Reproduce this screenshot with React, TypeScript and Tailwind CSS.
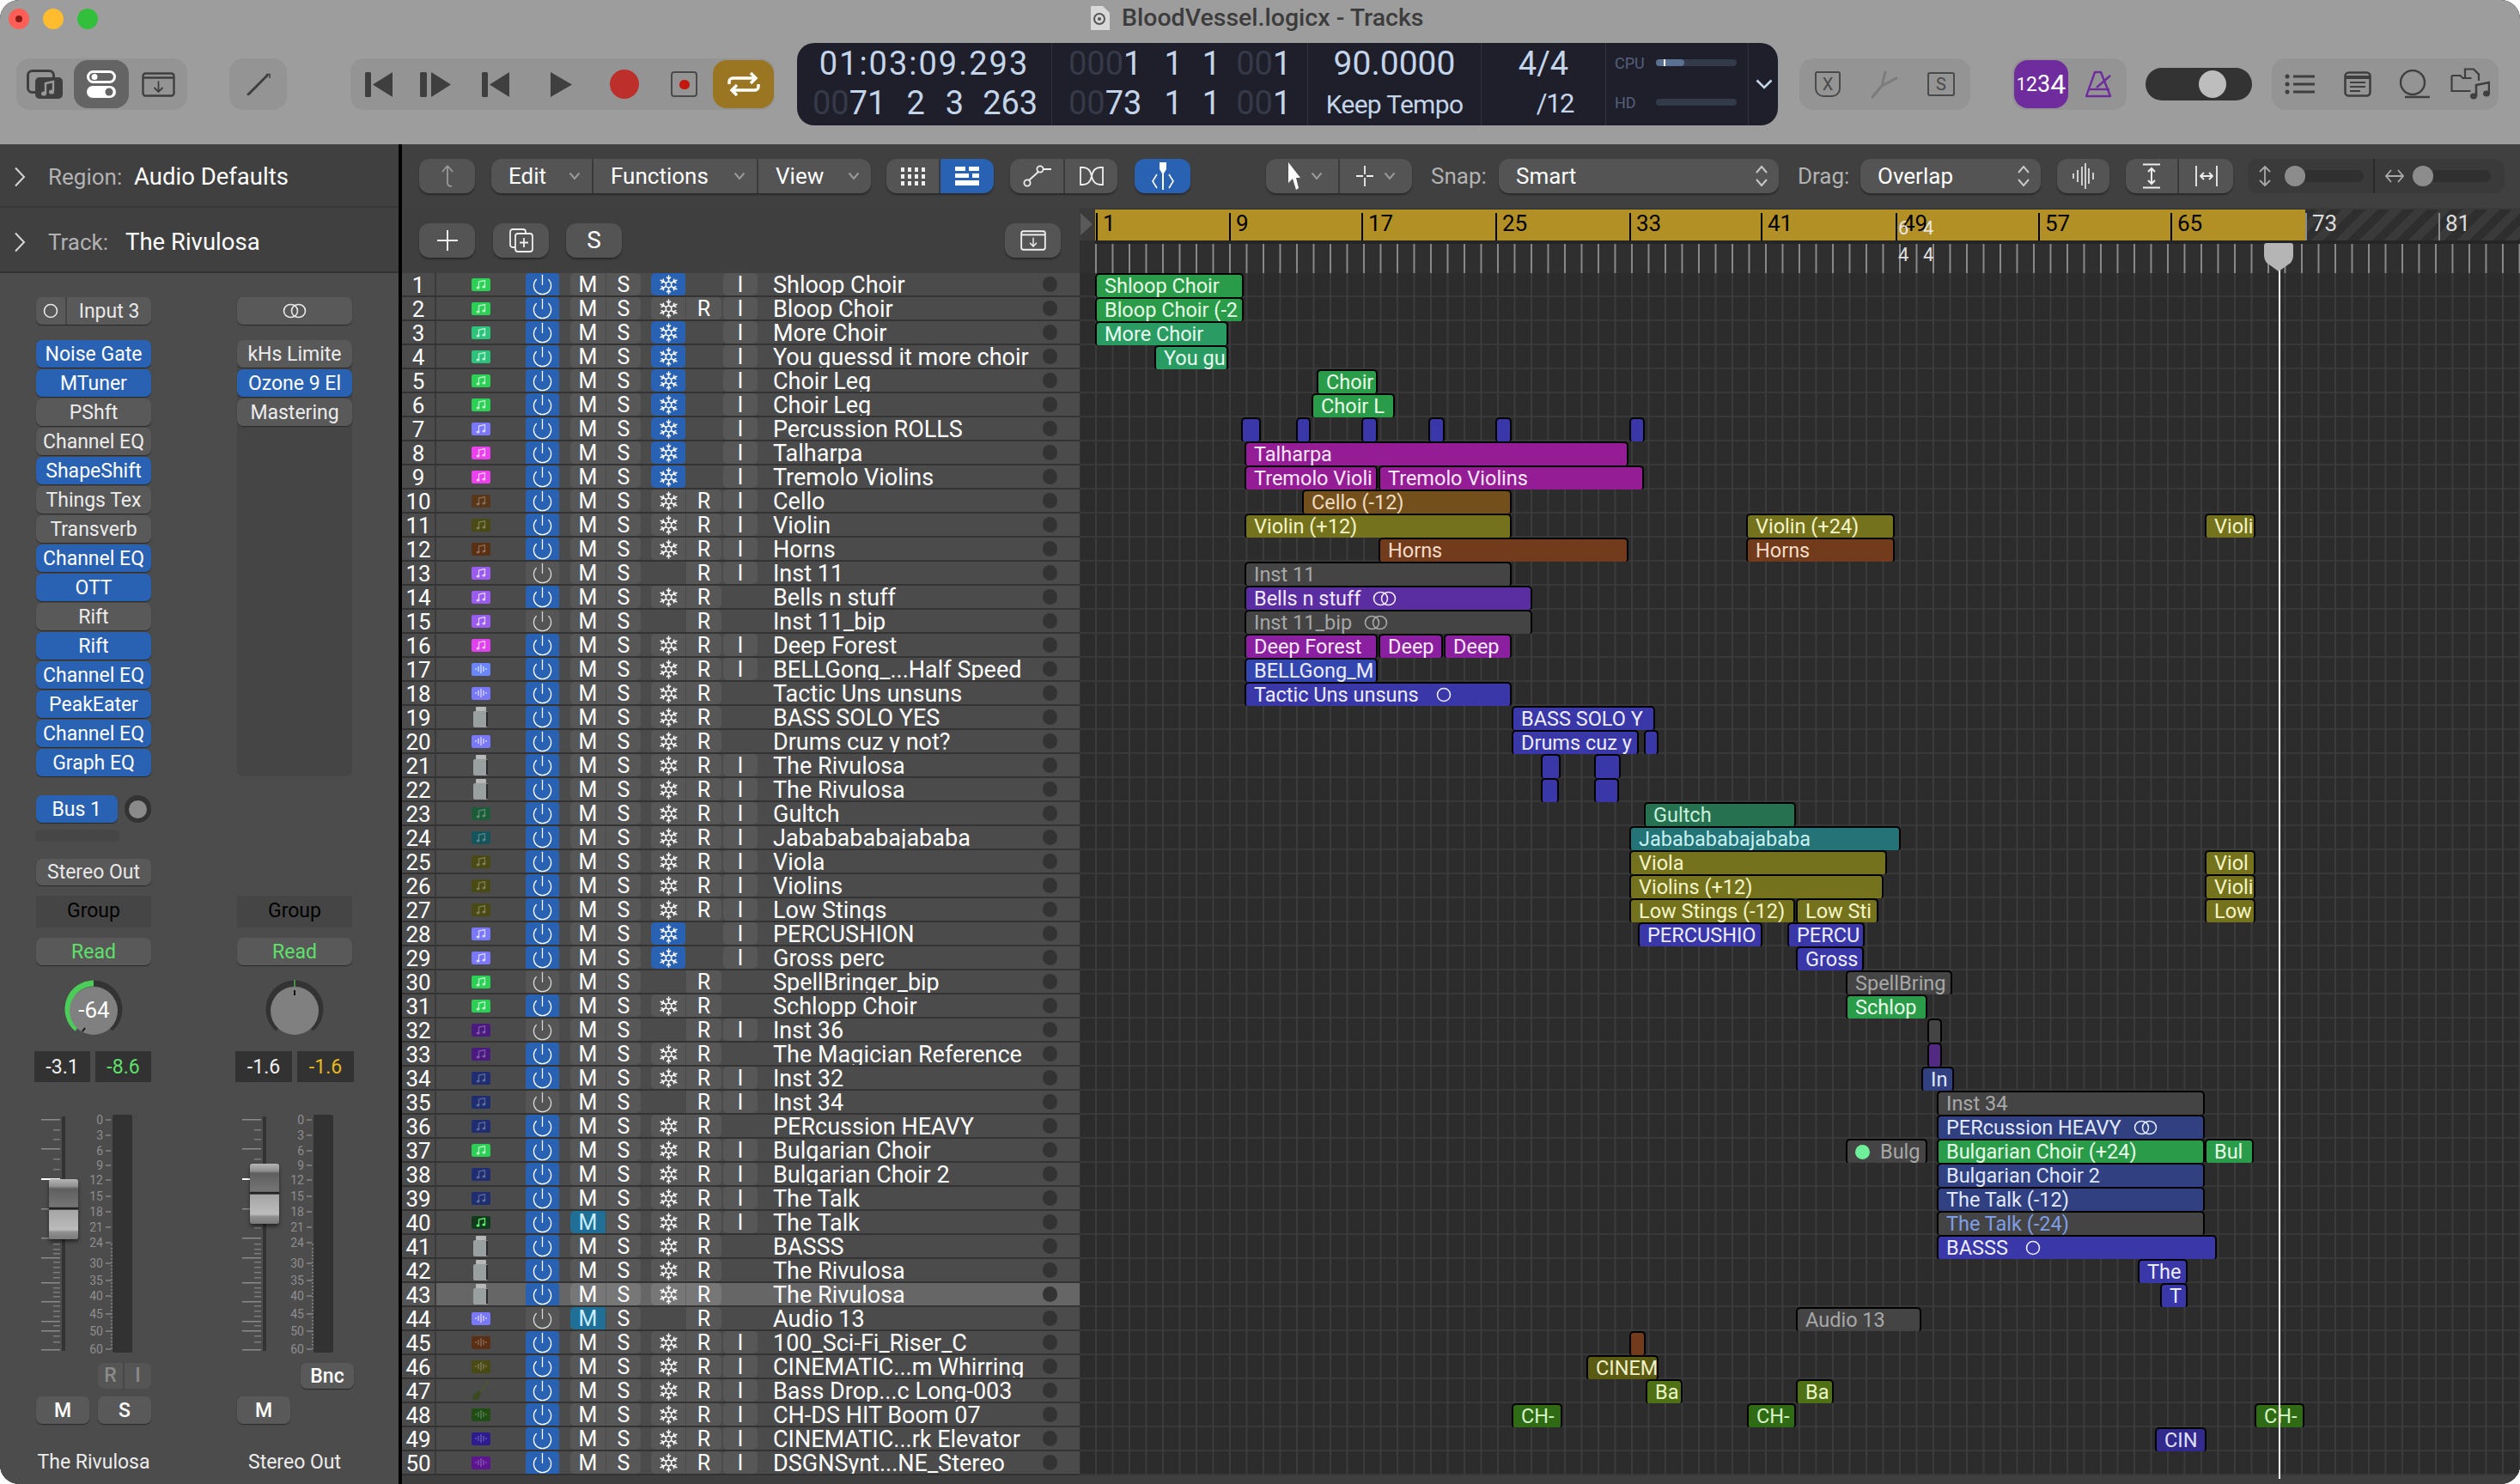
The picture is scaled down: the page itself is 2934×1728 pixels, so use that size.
import React from "react";
import { Power, Snowflake } from "lucide-react";

const GLYPH = "#3f3f3f";

type IconProps = { w: number; h: number; children: React.ReactNode; vb?: string };

function Svg({ w, h, children, vb }: IconProps) {
  return (
    <svg width={w} height={h} viewBox={vb ?? `0 0 ${w} ${h}`} preserveAspectRatio="none" fill="none" aria-hidden className="shrink-0">
      {children}
    </svg>
  );
}

function MediaIcon() {
  return (
    <Svg w={42} h={34}>
      <rect x="1.5" y="1.5" width="30" height="25" rx="5" stroke={GLYPH} strokeWidth="3" />
      <rect x="10" y="9" width="32" height="25" rx="5" fill={GLYPH} />
      <path d="M22 28V16l9-2v11" stroke="#999" strokeWidth="2.4" />
      <ellipse cx="20" cy="28" rx="3" ry="2.6" fill="#999" />
      <ellipse cx="29" cy="26" rx="3" ry="2.6" fill="#999" />
    </Svg>
  );
}

function SmartControlsIcon() {
  return (
    <Svg w={34} h={32}>
      <rect x="1.5" y="1.5" width="31" height="12" rx="6" stroke="#fff" strokeWidth="3" />
      <circle cx="9" cy="7.5" r="3.5" fill="#fff" />
      <rect x="0" y="18" width="34" height="14" rx="7" fill="#fff" />
      <circle cx="26" cy="25" r="4.5" fill="#646464" />
    </Svg>
  );
}

function DownloadBoxIcon({ color = GLYPH, w = 39, h = 29 }: { color?: string; w?: number; h?: number }) {
  return (
    <Svg w={w} h={h} vb="0 0 39 29">
      <rect x="1.5" y="1.5" width="36" height="26" rx="3" stroke={color} strokeWidth="2.4" />
      <path d="M1.5 6.5h36" stroke={color} strokeWidth="2.4" />
      <path d="M19.5 10.5v12M14.5 18l5 5 5-5" stroke={color} strokeWidth="1.8" />
    </Svg>
  );
}

function PencilIcon() {
  return (
    <Svg w={28} h={26}>
      <path d="M2 25 24 3" stroke={GLYPH} strokeWidth="3" strokeLinecap="round" />
      <path d="M23 1.5h4V6" stroke={GLYPH} strokeWidth="1.5" />
    </Svg>
  );
}

function TransportBack({ w }: { w: number }) {
  return (
    <Svg w={w} h={29} vb="0 0 32 29">
      <rect x="0" y="0" width="7" height="29" rx="1.5" fill={GLYPH} />
      <path d="M32 0v29L9 14.5z" fill={GLYPH} />
    </Svg>
  );
}

function TransportForward() {
  return (
    <Svg w={36} h={29}>
      <rect x="0" y="0" width="8" height="29" rx="1.5" fill={GLYPH} />
      <path d="M13 0v29l23-14.5z" fill={GLYPH} />
    </Svg>
  );
}

function CycleIcon() {
  return (
    <Svg w={38} h={30}>
      <path d="M2 15v-3a4 4 0 0 1 4-4h26M27 2l6 6-6 6" stroke="#fff" strokeWidth="3.4" />
      <path d="M36 15v3a4 4 0 0 1-4 4H6M11 16l-6 6 6 6" stroke="#fff" strokeWidth="3.4" />
    </Svg>
  );
}

function ShieldLetter({ letter }: { letter: string }) {
  return (
    <div className="flex h-[30px] w-[30px] items-center justify-center rounded-b-[10px] rounded-t-[3px] border-2 border-[#4a4a4a] text-[20px] leading-none text-[#4a4a4a]">
      {letter}
    </div>
  );
}

function BoxLetter({ letter }: { letter: string }) {
  return (
    <div className="flex h-[28px] w-[32px] items-center justify-center rounded-[3px] border-2 border-[#4a4a4a] text-[20px] leading-none text-[#4a4a4a]">
      {letter}
    </div>
  );
}

function TuningForkIcon() {
  return (
    <Svg w={34} h={34}>
      <path d="M3 32l11-13M14 19l4-16M14 19l17-9" stroke="#7c7c7c" strokeWidth="3" strokeLinecap="round" />
    </Svg>
  );
}

function MetronomeIcon() {
  return (
    <Svg w={31} h={32}>
      <path d="M1 30 11 2h7l11 28z" stroke="#6f2c9c" strokeWidth="2.4" strokeLinejoin="round" />
      <path d="M3 22h25" stroke="#6f2c9c" strokeWidth="2.4" />
      <path d="M13 20 29 6" stroke="#6f2c9c" strokeWidth="2.4" />
    </Svg>
  );
}

function ListIcon() {
  return (
    <Svg w={35} h={24}>
      <path d="M10 3h25M10 12h25M10 21h25" stroke={GLYPH} strokeWidth="3" />
      <circle cx="3" cy="3" r="2.5" fill={GLYPH} />
      <circle cx="3" cy="12" r="2.5" fill={GLYPH} />
      <circle cx="3" cy="21" r="2.5" fill={GLYPH} />
    </Svg>
  );
}

function NotePadIcon() {
  return (
    <Svg w={32} h={30}>
      <rect x="1.5" y="1.5" width="29" height="27" rx="4" stroke={GLYPH} strokeWidth="2.6" />
      <path d="M1.5 7h29" stroke={GLYPH} strokeWidth="4" />
      <path d="M7 13h18M7 18h18M7 23h12" stroke={GLYPH} strokeWidth="1.8" />
    </Svg>
  );
}

function LoopIcon() {
  return (
    <Svg w={37} h={34}>
      <ellipse cx="17" cy="15" rx="14" ry="14" stroke={GLYPH} strokeWidth="2.4" />
      <path d="M8 32h29" stroke={GLYPH} strokeWidth="2.6" />
    </Svg>
  );
}

function BrowserIcon() {
  return (
    <Svg w={46} h={38}>
      <path d="M1.5 9v18h22M1.5 9h10l3 3h10" stroke={GLYPH} strokeWidth="2.2" />
      <path d="M17 12V1.5h10l6 6V15" stroke={GLYPH} strokeWidth="2.2" />
      <path d="M30 33V20l15-3v13" stroke={GLYPH} strokeWidth="2.6" />
      <ellipse cx="27" cy="33" rx="4" ry="3.4" fill={GLYPH} />
      <ellipse cx="42" cy="30" rx="4" ry="3.4" fill={GLYPH} />
    </Svg>
  );
}

function FileIcon() {
  return (
    <Svg w={24} h={28}>
      <path d="M2 0h14l8 8v20H2z" fill="#d8d8d8" />
      <circle cx="12" cy="15" r="6" stroke="#555" strokeWidth="2" />
      <circle cx="12" cy="15" r="2" fill="#555" />
    </Svg>
  );
}

function Ring({ dbl }: { dbl?: boolean }) {
  return (
    <Svg w={dbl ? 28 : 18} h={18}>
      {dbl ? (
        <>
          <ellipse cx="9.5" cy="9" rx="8" ry="7.5" stroke="currentColor" strokeWidth="1.6" />
          <ellipse cx="18.5" cy="9" rx="8" ry="7.5" stroke="currentColor" strokeWidth="1.6" />
        </>
      ) : (
        <ellipse cx="9" cy="9" rx="7.5" ry="7.5" stroke="currentColor" strokeWidth="1.6" />
      )}
    </Svg>
  );
}

// ---- top of window ----

function Group({ w, children }: { w: string; children: React.ReactNode }) {
  return <div className={`flex h-[60px] items-center rounded-[16px] bg-[#949494] ${w}`}>{children}</div>;
}

function Digits({ parts }: { parts: [string, string, boolean?][] }) {
  return (
    <>
      {parts.map(([text, ml, dim], i) => (
        <span key={i} className={`${ml} ${dim ? "text-[#363a48]" : "text-[#c4d5ea]"}`}>
          {text}
        </span>
      ))}
    </>
  );
}

function LcdCol({ w, border = true, children }: { w: string; border?: boolean; children: React.ReactNode }) {
  return <div className={`flex h-full flex-col ${w} ${border ? "border-r border-[#2f3140]" : ""}`}>{children}</div>;
}

function LcdRow({ className = "", children }: { className?: string; children: React.ReactNode }) {
  return <div className={`flex h-[46px] items-center whitespace-nowrap font-normal text-[#c4d5ea] ${className}`}>{children}</div>;
}

function Lcd() {
  return (
    <div className="flex h-[96px] w-[1142px] rounded-[20px] bg-[#1e1f2a]">
      <LcdCol w="w-[297px]">
        <LcdRow className="justify-center pt-[3px] text-[38px] tracking-[2px]">01:03:09.293</LcdRow>
        <LcdRow className="pl-[18px] pt-[2px] text-[38px]">
          <Digits parts={[["00", "", true], ["71", ""], ["2", "ml-[24px]"], ["3", "ml-[24px]"], ["263", "ml-[22px]"]]} />
        </LcdRow>
      </LcdCol>
      <LcdCol w="w-[298px]">
        <LcdRow className="pl-[19px] pt-[3px] text-[38px]">
          <Digits parts={[["000", "", true], ["1", ""], ["1", "ml-[26px]"], ["1", "ml-[23px]"], ["00", "ml-[18px]", true], ["1", ""]]} />
        </LcdRow>
        <LcdRow className="pl-[19px] pt-[2px] text-[38px]">
          <Digits parts={[["00", "", true], ["73", ""], ["1", "ml-[26px]"], ["1", "ml-[23px]"], ["00", "ml-[18px]", true], ["1", ""]]} />
        </LcdRow>
      </LcdCol>
      <LcdCol w="w-[202px]">
        <LcdRow className="justify-center pt-[3px] text-[39px]">90.0000</LcdRow>
        <LcdRow className="justify-center pt-[4px] text-[30px] tracking-[-0.7px]">Keep Tempo</LcdRow>
      </LcdCol>
      <LcdCol w="w-[145px]">
        <LcdRow className="justify-center pt-[3px] text-[38px]">4/4</LcdRow>
        <LcdRow className="justify-end pr-[37px] pt-[4px] text-[31px] tracking-[-1.5px]">/12</LcdRow>
      </LcdCol>
      <LcdCol w="w-[166px]">
        <div className="flex h-[46px] items-center pl-[10px] text-[18px] text-[#55607a]">
          <span className="w-[48px]">CPU</span>
          <div className="relative h-[8px] w-[94px] rounded-full bg-[#333a4a]">
            <div className="h-full w-[33px] rounded-full bg-[#5a7192]" />
            <div className="absolute left-[9px] top-0 h-full w-[2px] bg-white" />
          </div>
        </div>
        <div className="flex h-[46px] items-center pl-[10px] text-[18px] text-[#55607a]">
          <span className="w-[48px]">HD</span>
          <div className="h-[8px] w-[94px] rounded-full bg-[#333a4a]" />
        </div>
      </LcdCol>
      <LcdCol w="w-[34px]" border={false}>
        <div className="flex h-full items-center pl-[8px]">
          <Svg w={20} h={12}>
            <path d="M1.5 1.5 10 10l8.5-8.5" stroke="#c4d5ea" strokeWidth="2.6" />
          </Svg>
        </div>
      </LcdCol>
    </div>
  );
}

function TopBar() {
  return (
    <div className="h-[168px] shrink-0 bg-[#9d9d9d]">
      <div className="flex h-[50px] items-start pl-[10px] pt-[7px]">
        <div className="mt-[3px] h-[24px] w-[24px] rounded-full bg-[#ff5f57] p-[8px]">
          <div className="h-full w-full rounded-full bg-[#8a1a14]" />
        </div>
        <div className="ml-[16px] mt-[3px] h-[24px] w-[24px] rounded-full bg-[#febc2e]" />
        <div className="ml-[16px] mt-[3px] h-[24px] w-[24px] rounded-full bg-[#32c03c]" />
        <div className="ml-[1154px] flex items-center gap-[14px]">
          <FileIcon />
          <span className="whitespace-nowrap text-[28.5px] font-medium leading-[28px] text-[#3c3c3c]">BloodVessel.logicx - Tracks</span>
        </div>
      </div>
      <div className="flex h-[96px] items-center pl-[19px]">
        <Group w="w-[199px]">
          <div className="ml-[12px]"><MediaIcon /></div>
          <div className="ml-[13px] flex h-[56px] w-[64px] items-center justify-center rounded-[16px] bg-[#646464]"><SmartControlsIcon /></div>
          <div className="ml-[15px]"><DownloadBoxIcon /></div>
        </Group>
        <div className="ml-[49px] flex h-[60px] w-[67px] items-center justify-center rounded-[16px] bg-[#949494]"><PencilIcon /></div>
        <div className="ml-[74px]">
          <Group w="w-[494px]">
            <div className="ml-[17px]"><TransportBack w={32} /></div>
            <div className="ml-[32px]"><TransportForward /></div>
            <div className="ml-[36px]"><TransportBack w={32} /></div>
            <div className="ml-[48px]"><Svg w={25} h={29}><path d="M0 0v29l25-14.5z" fill={GLYPH} /></Svg></div>
            <div className="ml-[44px] h-[34px] w-[34px] rounded-full bg-[#bc2f2a]" />
            <div className="ml-[37px] flex h-[30px] w-[31px] items-center justify-center rounded-[4px] border-2 border-[#4a4a4a]">
              <div className="h-[11px] w-[12px] rounded-full bg-[#c4160e]" />
            </div>
            <div className="ml-[18px] flex h-[56px] w-[71px] items-center justify-center rounded-[16px] bg-[#9a7623]"><CycleIcon /></div>
          </Group>
        </div>
        <div className="ml-[26px]"><Lcd /></div>
        <div className="ml-[25px]">
          <Group w="w-[199px]">
            <div className="ml-[18px]"><ShieldLetter letter="X" /></div>
            <div className="ml-[34px]"><TuningForkIcon /></div>
            <div className="ml-[33px]"><BoxLetter letter="S" /></div>
          </Group>
        </div>
        <div className="ml-[49px]">
          <Group w="w-[133px]">
            <div className="ml-[2px] flex h-[56px] w-[63px] items-center justify-center rounded-[16px] bg-[#6f2c9c] font-normal leading-none text-white">
              <span className="text-[20px]">1</span>
              <span className="text-[23px]">2</span>
              <span className="text-[27px]">3</span>
              <span className="text-[32px]">4</span>
            </div>
            <div className="ml-[20px]"><MetronomeIcon /></div>
          </Group>
        </div>
        <div className="ml-[22px] flex h-[38px] w-[124px] items-center rounded-full bg-[#333]">
          <div className="ml-[62px] h-[32px] w-[32px] rounded-full bg-[#bdbdbd]" />
        </div>
        <div className="ml-[23px]">
          <Group w="w-[264px]">
            <div className="ml-[15px]"><ListIcon /></div>
            <div className="ml-[34px]"><NotePadIcon /></div>
            <div className="ml-[31px]"><LoopIcon /></div>
            <div className="ml-[24px]"><BrowserIcon /></div>
          </Group>
        </div>
      </div>
    </div>
  );
}

// ---- channel strips ----

const BTN = "flex items-center justify-center rounded-[7px] shadow-[0_1px_1px_#2a2a2a] text-[23px] leading-none";

function Plugin({ name, on }: { name: string; on?: boolean }) {
  return (
    <div className={`${BTN} mb-[2px] h-[32px] w-[134px] whitespace-nowrap ${on ? "bg-[#2a62b3] text-white" : "bg-[#595959] text-[#ececec]"}`}>
      {name}
    </div>
  );
}

const LONG_TICKS = [5, 39, 109, 143, 166, 195, 217, 240, 251, 273];
const SHORT_TICKS = [17, 28, 51, 63, 131, 150, 156, 161, 171, 177, 183, 189, 201, 206, 211, 222, 228, 234, 245, 257, 264];
const SCALE: [string, number][] = [
  ["0", 5], ["3", 23], ["6", 41], ["9", 58], ["12", 75], ["15", 94], ["18", 112], ["21", 130],
  ["24", 148], ["30", 172], ["35", 192], ["40", 210], ["45", 231], ["50", 251], ["60", 272],
];

function Fader({ capTop, whiteX }: { capTop: string; whiteX: number }) {
  return (
    <div className="flex h-[277px]">
      <div className="relative w-[50px]">
        <svg width="36" height="277" className="ml-[6px]" aria-hidden>
          {LONG_TICKS.map((y) => <rect key={y} x="0" y={y} width="22" height="1.5" fill="#8a8a8a" />)}
          {SHORT_TICKS.map((y) => <rect key={y} x="14" y={y} width="8" height="1.5" fill="#7c7c7c" />)}
          <rect x="0" y="74" width={whiteX} height="2" fill="#fff" />
          <rect x="24" y="2" width="4" height="273" fill="#333" />
        </svg>
        <div className={`absolute left-[15px] h-[70px] w-[34px] rounded-[3px] bg-[linear-gradient(180deg,#b5b5b5_0,#8f8f8f_12%,#5f5f5f_16%,#757575_46%,#1f1f1f_48%,#1f1f1f_50%,#a5a5a5_52%,#bcbcbc_84%,#8f8f8f_88%,#7a7a7a_100%)] shadow-[0_3px_4px_rgba(0,0,0,.5)] ${capTop}`} />
      </div>
      <div className="relative w-[39px]">
        {SCALE.map(([label, y]) => (
          <div key={label} className="absolute right-[11px] text-[14px] leading-[14px] text-[#8e8e8e]" style={{ top: y - 6 }}>
            {label}
          </div>
        ))}
        {SCALE.map(([label, y]) => (
          <div key={label} className="absolute right-[2px] h-[2px] w-[6px] bg-[#777]" style={{ top: y }} />
        ))}
        <div className="absolute bottom-[4px] right-0 top-[150px] border-r-2 border-dotted border-[#777]" />
      </div>
      <div className="h-full w-[23px] rounded-[2px] bg-[#323232]" />
    </div>
  );
}

function Knob({ active }: { active?: boolean }) {
  return (
    <div className="relative ml-[31px] h-[68px] w-[72px]">
      <Svg w={72} h={68}>
        <path d="M16.7 57A30 30 0 1 1 55.3 57" stroke="#333" strokeWidth="7" />
        {active ? <path d="M16.7 57A30 30 0 0 1 36 4" stroke="#4ccd5a" strokeWidth="7" /> : <path d="M36 0v8" stroke="#4ccd5a" strokeWidth="1.2" />}
        <ellipse cx="36" cy="36" rx="28" ry="28" fill="#808080" />
        {active ? <path d="M26 56l-3 4" stroke="#111" strokeWidth="2" /> : <path d="M36 12v6" stroke="#111" strokeWidth="2" />}
      </Svg>
      {active && (
        <div className="absolute inset-x-0 top-[20px] pl-[1px] text-center text-[26px] leading-[30px] text-white">-64</div>
      )}
    </div>
  );
}

function Strip({ wrap, left, right, rightColor, slots, name, fader, first }: {
  wrap: string; left: string; right: string; rightColor: string; slots: [string, boolean?][]; name: string; fader: string; first?: boolean;
}) {
  return (
    <div className={`flex h-full flex-col pt-[28px] ${wrap}`}>
      <div className={`${BTN} h-[32px] w-[134px] bg-[#595959] text-[#e8e8e8]`}>
        {first ? (
          <>
            <div className="flex h-full w-[36px] items-center justify-center border-r-2 border-[#454545]"><Ring /></div>
            <span className="flex-1 text-center">Input 3</span>
          </>
        ) : (
          <Ring dbl />
        )}
      </div>
      <div className={`mt-[18px] h-[508px] w-[134px] rounded-[7px] ${first ? "" : "bg-[#454545]"}`}>
        {slots.map(([n, on], i) => <Plugin key={i} name={n} on={on} />)}
      </div>
      <div className="h-[96px] pt-[22px]">
        {first && (
          <>
            <div className="flex items-center">
              <div className={`${BTN} h-[32px] w-[96px] bg-[#2a62b3] text-white`}>Bus 1</div>
              <div className="ml-[8px] flex h-[32px] w-[32px] items-center justify-center rounded-full bg-[#333]">
                <div className="h-[21px] w-[21px] rounded-full bg-[#8a8a8a]" />
              </div>
            </div>
            <div className="-ml-[1px] mt-[8px] h-[14px] w-[98px] rounded-[6px] bg-[#464646]" />
          </>
        )}
      </div>
      <div className={first ? `${BTN} h-[31px] w-[134px] bg-[#595959] text-[#e8e8e8]` : "h-[31px]"}>{first ? "Stereo Out" : ""}</div>
      <div className="mt-[12px] flex h-[37px] w-[134px] items-center justify-center bg-[#454545] text-[23px] text-black">Group</div>
      <div className={`${BTN} mt-[12px] h-[32px] w-[134px] bg-[#595959] text-[#5ee06a]`}>Read</div>
      <div className="mt-[17px]"><Knob active={first} /></div>
      <div className="-ml-[2px] mt-[15px] flex gap-[6px] text-[23px] leading-none">
        <div className="flex h-[36px] w-[66px] items-center justify-center bg-[#323232] text-[#f0f0f0]">{left}</div>
        <div className={`flex h-[36px] w-[66px] items-center justify-center bg-[#323232] ${rightColor}`}>{right}</div>
      </div>
      <div className="mt-[38px]"><Fader capTop={fader} whiteX={first ? 22 : 9} /></div>
      <div className="mt-[12px] flex h-[30px] justify-end">
        {first ? (
          <div className="flex h-[30px] w-[62px] items-center rounded-[7px] bg-[#555] text-[23px] font-medium text-[#8a8a8a]">
            <span className="w-[31px] border-r-2 border-[#484848] text-center">R</span>
            <span className="flex-1 text-center">I</span>
          </div>
        ) : (
          <div className={`${BTN} h-[30px] w-[62px] bg-[#595959] font-medium text-white`}>Bnc</div>
        )}
      </div>
      <div className="mt-[9px] flex h-[32px] justify-between">
        <div className={`${BTN} h-[32px] w-[62px] bg-[#595959] font-medium text-white`}>M</div>
        {first && <div className={`${BTN} h-[32px] w-[62px] bg-[#595959] font-medium text-white`}>S</div>}
      </div>
      <div className="mt-[30px] w-[134px] whitespace-nowrap text-center text-[23px] leading-[30px] text-[#ececec]">{name}</div>
    </div>
  );
}

function Disclosure({ label, value, labelW }: { label: string; value: string; labelW: string }) {
  return (
    <div className="flex items-center pl-[16px] text-[27.5px]">
      <Svg w={14} h={24}><path d="M2 1.5 12 12 2 22.5" stroke="#d5d5d5" strokeWidth="2" /></Svg>
      <span className={`ml-[26px] text-[26px] text-[#b2b2b2] ${labelW}`}>{label}</span>
      <span className="text-white">{value}</span>
    </div>
  );
}

function Inspector() {
  return (
    <div className="flex h-full w-[464px] shrink-0 flex-col bg-[#4c4c4c]">
      <div className="flex h-[74px] items-center border-b-2 border-[#363636] bg-[#404040] pt-[4px]"><Disclosure label="Region:" value="Audio Defaults" labelW="w-[100px]" /></div>
      <div className="flex h-[76px] items-center border-b-2 border-[#333] bg-[#404040] pt-[6px]"><Disclosure label="Track:" value="The Rivulosa" labelW="w-[90px]" /></div>
      <div className="flex flex-1">
        <div className="w-[229px]">
          <Strip
            first
            wrap="pl-[42px] pr-[53px]"
            left="-3.1"
            right="-8.6"
            rightColor="text-[#5ee06a]"
            name="The Rivulosa"
            fader="top-[75px]"
            slots={[["Noise Gate", true], ["MTuner", true], ["PShft"], ["Channel EQ"], ["ShapeShift", true], ["Things Tex"], ["Transverb"], ["Channel EQ", true], ["OTT", true], ["Rift"], ["Rift", true], ["Channel EQ", true], ["PeakEater", true], ["Channel EQ", true], ["Graph EQ", true]]}
          />
        </div>
        <div className="w-[2px] bg-[#3a3a3a]" />
        <div className="flex-1">
          <Strip
            wrap="pl-[47px] pr-[52px]"
            left="-1.6"
            right="-1.6"
            rightColor="text-[#e8b820]"
            name="Stereo Out"
            fader="top-[57px]"
            slots={[["kHs Limite"], ["Ozone 9 El", true], ["Mastering"]]}
          />
        </div>
      </div>
    </div>
  );
}

// ---- tracks toolbar ----

const TB = "flex h-[40px] items-center text-white shadow-[0_2px_2px_rgba(0,0,0,.35)]";
const TBG = `${TB} justify-center bg-[#545454]`;
const TBLUE = `${TB} justify-center bg-[#2a62b3]`;
const SEP = "border-r-2 border-[#3e3e3e]";

function Caret() {
  return <Svg w={14} h={10}><path d="M1.5 1.5 7 8l5.5-6.5" stroke="#9a9a9a" strokeWidth="2" /></Svg>;
}

function MenuItem({ label, className }: { label: string; className: string }) {
  return (
    <div className={`${TB} justify-between bg-[#545454] pl-[20px] pr-[13px] text-[26px] ${className}`}>
      <span>{label}</span>
      <Caret />
    </div>
  );
}

function Select({ w, value }: { w: string; value: string }) {
  return (
    <div className={`flex h-[40px] items-center justify-between rounded-[12px] bg-[#545454] pl-[20px] pr-[12px] text-[26px] text-white shadow-[0_2px_2px_rgba(0,0,0,.35)] ${w}`}>
      <span>{value}</span>
      <Svg w={16} h={28}><path d="M2 10l6-7 6 7M2 18l6 7 6-7" stroke="#c8c8c8" strokeWidth="2" /></Svg>
    </div>
  );
}

function EditBar() {
  return (
    <div className="flex h-[74px] shrink-0 items-center bg-[#404040] pl-[20px]">
      <div className={`${TBG} w-[65px] rounded-[12px]`}>
        <Svg w={22} h={28}><path d="M11 2 5 9M11 2l6 7M11 2v20q0 4 5 4" stroke="#9a9a9a" strokeWidth="1.8" /></Svg>
      </div>
      <div className="ml-[19px] flex">
        <MenuItem label="Edit" className={`w-[119px] rounded-l-[12px] ${SEP}`} />
        <MenuItem label="Functions" className={`w-[192px] ${SEP}`} />
        <MenuItem label="View" className="w-[131px] rounded-r-[12px]" />
      </div>
      <div className="ml-[18px] flex">
        <div className={`${TBG} w-[63px] rounded-l-[12px] ${SEP}`}>
          <Svg w={28} h={24}>
            {[0, 8, 16].map((y) => [0, 8, 16, 24].map((x) => <rect key={`${x}${y}`} x={x} y={y + 2} width="4" height="5" fill="#eee" />))}
          </Svg>
        </div>
        <div className={`${TBLUE} w-[62px] rounded-r-[12px]`}>
          <Svg w={28} h={22}>
            <path d="M0 0h12v5H0zM16 0h12v5H16zM0 8h16v5H0zM20 8h8v5h-8zM0 16h28v6H0z" fill="#fff" />
          </Svg>
        </div>
      </div>
      <div className="ml-[19px] flex">
        <div className={`${TBG} w-[64px] rounded-l-[12px] ${SEP}`}>
          <Svg w={34} h={26}>
            <circle cx="6" cy="21" r="3.6" stroke="#eee" strokeWidth="1.8" />
            <circle cx="21" cy="5" r="3.6" stroke="#eee" strokeWidth="1.8" />
            <path d="M8 18 19 8M25 5h9" stroke="#eee" strokeWidth="1.8" />
          </Svg>
        </div>
        <div className={`${TBG} w-[61px] rounded-r-[12px]`}>
          <Svg w={30} h={24}><path d="M2 2h3q8 0 10 10t10 10h3V2h-3Q17 2 15 12T5 22H2z" stroke="#eee" strokeWidth="1.8" /></Svg>
        </div>
      </div>
      <div className={`${TBLUE} ml-[20px] w-[65px] rounded-[12px]`}>
        <Svg w={26} h={32}>
          <path d="M9 0h8v8l-3 5h-2L9 8z" fill="#fff" />
          <path d="M13 12v20" stroke="#fff" strokeWidth="2" />
          <path d="M6 14 1 22l5 8M20 14l5 8-5 8" stroke="#fff" strokeWidth="1.6" />
        </Svg>
      </div>
      <div className="ml-[88px] flex">
        <div className={`${TBG} w-[86px] gap-[12px] rounded-l-[12px] pl-[6px] ${SEP}`}>
          <Svg w={15} h={32}><path d="M1 0v24l5-5 4 13 3-2-3-12h5z" fill="#fff" /></Svg>
          <Caret />
        </div>
        <div className={`${TBG} w-[84px] gap-[12px] rounded-r-[12px]`}>
          <Svg w={20} h={24}><path d="M10 0v10M10 14v10M0 12h8M12 12h8" stroke="#eee" strokeWidth="1.8" /></Svg>
          <Caret />
        </div>
      </div>
      <span className="ml-[22px] w-[79px] text-[26px] text-[#b2b2b2]">Snap:</span>
      <Select w="w-[326px]" value="Smart" />
      <span className="ml-[22px] w-[73px] text-[26px] text-[#b2b2b2]">Drag:</span>
      <Select w="w-[210px]" value="Overlap" />
      <div className={`${TBG} ml-[19px] w-[61px] rounded-[12px]`}>
        <Svg w={28} h={30}>
          <path d="M2 12v6M7 8v14M12 4v22M16 0v30M20 6v18M25 11v8" stroke="#eee" strokeWidth="1.6" />
        </Svg>
      </div>
      <div className="ml-[19px] flex">
        <div className={`${TBG} w-[62px] rounded-l-[12px] ${SEP}`}>
          <Svg w={20} h={30}><path d="M0 1.5h20M0 28.5h20M10 6v18M6 10l4-4 4 4M6 20l4 4 4-4" stroke="#eee" strokeWidth="2" /></Svg>
        </div>
        <div className={`${TBG} w-[63px] rounded-r-[12px]`}>
          <Svg w={26} h={28}><path d="M1 2v24M25 2v24M7 14h12M10 10l-4 4 4 4M16 10l4 4-4 4" stroke="#eee" strokeWidth="1.8" /></Svg>
        </div>
      </div>
      <div className="ml-[17px] flex h-[40px] w-[299px] rounded-[12px] bg-[#3a3a3a]">
        <div className="flex w-[148px] items-center border-r-2 border-[#2a2a2a] pl-[12px]">
          <Svg w={16} h={28}><path d="M8 3v22M2 9l6-6 6 6M2 19l6 6 6-6" stroke="#aaa" strokeWidth="1.8" /></Svg>
          <div className="ml-[15px] h-[24px] w-[24px] rounded-full bg-[#8c8c8c]" />
          <div className="h-[14px] w-[68px] rounded-r-full bg-[#303030]" />
        </div>
        <div className="flex flex-1 items-center pl-[12px]">
          <Svg w={22} h={24}><path d="M1 12h20M7 5l-6 7 6 7M15 5l6 7-6 7" stroke="#aaa" strokeWidth="1.8" /></Svg>
          <div className="ml-[10px] h-[24px] w-[24px] rounded-full bg-[#8c8c8c]" />
          <div className="h-[14px] w-[67px] rounded-r-full bg-[#303030]" />
        </div>
      </div>
    </div>
  );
}

// ---- track list ----

type Icon = "note" | "wave" | "amp" | "guitar";
type Track = {
  n: string; c: string; i?: Icon; frz?: 0 | 1 | 2; r?: boolean; ins?: boolean; off?: boolean; mute?: boolean; dim?: boolean;
};

const GRN = "bg-[#2bd155]";
const SEA = "bg-[#2cc47a]";
const PER = "bg-[#7a78ff]";
const VIO = "bg-[#9a5cf0]";
const PNK = "bg-[#ec40ee]";
const BRN = "bg-[#57361a]";
const OLV = "bg-[#4a4a14]";
const NVY = "bg-[#1e2e70]";
const PUR = "bg-[#4a1a80]";

const TRACKS: Track[] = [
  { n: "Shloop Choir", c: GRN, frz: 2, ins: true },
  { n: "Bloop Choir", c: GRN, frz: 1, r: true, ins: true },
  { n: "More Choir", c: SEA, frz: 2, ins: true },
  { n: "You guessd it more choir", c: SEA, frz: 2, ins: true },
  { n: "Choir Leg", c: GRN, frz: 2, ins: true },
  { n: "Choir Leg", c: GRN, frz: 2, ins: true },
  { n: "Percussion ROLLS", c: PER, frz: 2, ins: true },
  { n: "Talharpa", c: PNK, frz: 2, ins: true },
  { n: "Tremolo Violins", c: PNK, frz: 2, ins: true },
  { n: "Cello", c: BRN, dim: true, frz: 1, r: true, ins: true },
  { n: "Violin", c: OLV, dim: true, frz: 1, r: true, ins: true },
  { n: "Horns", c: "bg-[#5a3014]", dim: true, frz: 1, r: true, ins: true },
  { n: "Inst 11", c: VIO, off: true, r: true, ins: true },
  { n: "Bells n stuff", c: VIO, frz: 1, r: true },
  { n: "Inst 11_bip", c: VIO, off: true, r: true },
  { n: "Deep Forest", c: "bg-[#e040f0]", frz: 1, r: true, ins: true },
  { n: "BELLGong_...Half Speed", c: "bg-[#6a86ff]", i: "wave", frz: 1, r: true, ins: true },
  { n: "Tactic Uns unsuns", c: PER, i: "wave", frz: 1, r: true },
  { n: "BASS SOLO YES", c: "", i: "amp", frz: 1, r: true },
  { n: "Drums cuz y not?", c: PER, i: "wave", frz: 1, r: true },
  { n: "The Rivulosa", c: "", i: "amp", frz: 1, r: true, ins: true },
  { n: "The Rivulosa", c: "", i: "amp", frz: 1, r: true, ins: true },
  { n: "Gultch", c: "bg-[#1d5c3a]", dim: true, frz: 1, r: true, ins: true },
  { n: "Jababababajababa", c: "bg-[#14545a]", dim: true, frz: 1, r: true, ins: true },
  { n: "Viola", c: OLV, dim: true, frz: 1, r: true, ins: true },
  { n: "Violins", c: OLV, dim: true, frz: 1, r: true, ins: true },
  { n: "Low Stings", c: OLV, dim: true, frz: 1, r: true, ins: true },
  { n: "PERCUSHION", c: PER, frz: 2, ins: true },
  { n: "Gross perc", c: PER, frz: 2, ins: true },
  { n: "SpellBringer_bip", c: GRN, off: true, r: true },
  { n: "Schlopp Choir", c: GRN, frz: 1, r: true },
  { n: "Inst 36", c: PUR, dim: true, off: true, r: true, ins: true },
  { n: "The Magician Reference", c: PUR, dim: true, frz: 1, r: true },
  { n: "Inst 32", c: NVY, dim: true, frz: 1, r: true, ins: true },
  { n: "Inst 34", c: NVY, dim: true, off: true, r: true, ins: true },
  { n: "PERcussion HEAVY", c: NVY, dim: true, frz: 1, r: true },
  { n: "Bulgarian Choir", c: GRN, frz: 1, r: true, ins: true },
  { n: "Bulgarian Choir 2", c: NVY, dim: true, frz: 1, r: true, ins: true },
  { n: "The Talk", c: NVY, dim: true, frz: 1, r: true, ins: true },
  { n: "The Talk", c: "bg-[#123a1e]", frz: 1, r: true, ins: true, mute: true },
  { n: "BASSS", c: "", i: "amp", frz: 1, r: true },
  { n: "The Rivulosa", c: "", i: "amp", frz: 1, r: true },
  { n: "The Rivulosa", c: "", i: "amp", frz: 1, r: true },
  { n: "Audio 13", c: PER, i: "wave", off: true, mute: true, r: true },
  { n: "100_Sci-Fi_Riser_C", c: "bg-[#5a3014]", i: "wave", dim: true, frz: 1, r: true, ins: true },
  { n: "CINEMATIC...m Whirring", c: OLV, i: "wave", dim: true, frz: 1, r: true, ins: true },
  { n: "Bass Drop...c Long-003", c: "", i: "guitar", frz: 1, r: true, ins: true },
  { n: "CH-DS HIT Boom 07", c: "bg-[#1f4d14]", i: "wave", dim: true, frz: 1, r: true, ins: true },
  { n: "CINEMATIC...rk Elevator", c: "bg-[#2c1c90]", i: "wave", dim: true, frz: 1, r: true, ins: true },
  { n: "DSGNSynt...NE_Stereo", c: "bg-[#5c1490]", i: "wave", dim: true, frz: 1, r: true, ins: true },
];

function TrackIcon({ t }: { t: Track }) {
  if (t.i === "amp") {
    return (
      <Svg w={18} h={24}>
        <rect x="3" y="0" width="12" height="5" rx="1" fill="#b8b8b8" />
        <rect x="0" y="5" width="17" height="19" rx="2" fill="#9aa0a0" />
        <path d="M15 6h2v17h-2z" fill="#2a2a2a" />
      </Svg>
    );
  }
  if (t.i === "guitar") {
    return (
      <Svg w={22} h={24}>
        <path d="M9 15 20 1" stroke="#4c5a2a" strokeWidth="1.4" />
        <path d="M3 16l6-4 2 4-3 7H2l-1-4z" fill="#3c4a22" />
      </Svg>
    );
  }
  const stroke = t.dim ? "#ffffff45" : t.c === "bg-[#123a1e]" ? "#5ef06a" : "#ffffffb0";
  return (
    <div className={`flex h-[15px] w-[22px] items-center justify-center rounded-[2px] ${t.c}`}>
      {t.i === "wave" ? (
        <Svg w={14} h={10}>
          <path d="M1 4v2M4 2v6M7 0v10M10 2v6M13 4v2" stroke={stroke} strokeWidth="1.4" />
        </Svg>
      ) : (
        <Svg w={12} h={11}>
          <path d="M3.5 9V2l7-1.5V8" stroke={stroke} strokeWidth="1.3" />
          <ellipse cx="2.5" cy="9" rx="2" ry="1.6" fill={stroke} />
          <ellipse cx="9.3" cy="8" rx="2" ry="1.6" fill={stroke} />
        </Svg>
      )}
    </div>
  );
}

function TrackRow({ t, idx }: { t: Track; idx: number }) {
  const sel = idx === 42;
  const cell = sel ? "bg-[#777]" : "bg-[#575757]";
  return (
    <div className={`flex h-[28px] items-center border-b-2 border-[#333] text-[25px] leading-[28px] text-white ${sel ? "bg-[#666]" : "bg-[#4b4b4b]"}`}>
      <div className={`h-[26px] w-[40px] shrink-0 border-r-2 border-[#3a3a3a] text-center text-[26px] ${sel ? "bg-[#555]" : ""}`}>{idx + 1}</div>
      <div className="flex h-[26px] w-[104px] shrink-0 items-center justify-center">
        <TrackIcon t={t} />
      </div>
      <div className={`flex h-[26px] w-[39px] shrink-0 items-center justify-center rounded-t-[4px] ${t.off ? "bg-[#555]" : "bg-[#2a62b3]"}`}>
        <Power size={27} strokeWidth={1.1} className={t.off ? "text-[#d8d8d8]" : "text-white"} />
      </div>
      <div className={`ml-[13px] h-[26px] w-[41px] shrink-0 rounded-l-[5px] text-center ${t.mute ? "bg-[#1f6f96] text-[#c8eeff]" : cell}`}>M</div>
      <div className={`ml-[1px] h-[26px] w-[40px] shrink-0 rounded-r-[5px] text-center ${cell}`}>S</div>
      <div className={`ml-[12px] flex h-[26px] w-[40px] shrink-0 items-center justify-center rounded-l-[5px] ${t.frz === 2 ? "rounded-[4px] bg-[#2a62b3]" : t.frz === 1 ? cell : ""}`}>
        {t.frz ? <Snowflake size={25} strokeWidth={1.5} className="rotate-90 text-white" /> : null}
      </div>
      <div className={`ml-[1px] h-[26px] w-[41px] shrink-0 rounded-r-[5px] text-center ${t.r ? cell : ""}`}>{t.r ? "R" : ""}</div>
      <div className={`ml-[2px] h-[26px] w-[40px] shrink-0 rounded-[5px] text-center ${t.ins ? cell : ""}`}>{t.ins ? "I" : ""}</div>
      <div className="ml-[18px] h-[26px] w-[314px] shrink-0 overflow-hidden whitespace-nowrap text-[27px]">{t.n}</div>
      <div className="h-[18px] w-[17px] shrink-0 rounded-full bg-[#333]" />
    </div>
  );
}

function ListHeaderButton({ className, children }: { className?: string; children: React.ReactNode }) {
  return <div className={`${TBG} w-[65px] rounded-[12px] ${className ?? ""}`}>{children}</div>;
}

function TrackList() {
  return (
    <div className="flex h-full w-[789px] shrink-0 flex-col bg-[#3f3f3f]">
      <div className="flex h-[76px] shrink-0 items-start pl-[20px] pt-[18px]">
        <ListHeaderButton>
          <Svg w={24} h={26}><path d="M12 1v24M0 13h24" stroke="#eee" strokeWidth="2" /></Svg>
        </ListHeaderButton>
        <ListHeaderButton className="ml-[21px]">
          <Svg w={28} h={28}>
            <rect x="1" y="1" width="18" height="21" rx="3" stroke="#eee" strokeWidth="1.8" />
            <rect x="7" y="6" width="20" height="21" rx="3" fill="#545454" stroke="#eee" strokeWidth="1.8" />
            <path d="M17 11v11M12 16.5h10" stroke="#eee" strokeWidth="1.8" />
          </Svg>
        </ListHeaderButton>
        <ListHeaderButton className="ml-[20px] text-[28px]">S</ListHeaderButton>
        <ListHeaderButton className="ml-[446px]">
          <DownloadBoxIcon color="#eee" w={30} h={24} />
        </ListHeaderButton>
      </div>
      {TRACKS.map((t, i) => <TrackRow key={i} t={t} idx={i} />)}
    </div>
  );
}

// ---- timeline ----

const RULER_X = 1257;

const BARS: [string, number, boolean?][] = [
  ["1", 1276], ["9", 1431], ["17", 1585], ["25", 1741], ["33", 1897], ["41", 2050], ["49", 2207],
  ["57", 2373], ["65", 2527], ["73", 2684, true], ["81", 2839, true],
];

function Ruler() {
  return (
    <div className="relative h-[76px] shrink-0 bg-[#3a3a3a]">
      <div className="flex h-[36px] translate-y-[2px] pl-[18px]">
        <div className="w-[1409px] bg-[#b39026]" />
        <div className="flex-1 bg-[repeating-linear-gradient(135deg,#2e2e2e_0_10px,#3a3a3a_10px_20px)]" />
      </div>
      <div className="absolute bottom-0 left-0 top-[38px] w-[18px] bg-[#303030]" />
      <div className="absolute left-0 top-[6px]">
        <Svg w={16} h={26}><path d="M1 0 15 13 1 26z" fill="#5a5a5a" /></Svg>
      </div>
      <div className="absolute bottom-0 left-[18px] right-0 top-[38px] bg-[#262626]" />
      <div className="absolute bottom-0 left-[18px] right-0 top-[42px] bg-[#2f2f2f] bg-[linear-gradient(90deg,#8a8a8a_2px,transparent_2px)] bg-[size:19.5px_100%]" />
      {BARS.map(([label, x, light]) => (
        <div key={label} className="absolute top-[6px]" style={{ left: x - RULER_X }}>
          <div className={`absolute left-0 top-0 h-[32px] w-[2px] ${light ? "bg-[#8a8a8a]" : "bg-black"}`} />
          <span className={`absolute left-[8px] top-[-4px] text-[26px] leading-[32px] ${light ? "text-[#dcdcdc]" : "text-black"}`}>{label}</span>
        </div>
      ))}
      <span className="absolute left-[953px] top-[10px] text-[22px] leading-[28px] text-[#e6e6e6]">6</span>
      <span className="absolute left-[982px] top-[10px] text-[22px] leading-[28px] text-[#e6e6e6]">4</span>
      <span className="absolute left-[953px] top-[42px] text-[22px] leading-[26px] text-[#e0e0e0]">4</span>
      <span className="absolute left-[982px] top-[42px] text-[22px] leading-[26px] text-[#e0e0e0]">4</span>
    </div>
  );
}

type Tone = keyof typeof TONES;
const TONES = {
  green: "bg-[#2a9b49] text-[#e8ffe8]",
  sea: "bg-[#2a9b63] text-[#e8fff0]",
  blue: "bg-[#3a37a8] text-[#ececff]",
  bell: "bg-[#3346b0] text-[#ececff]",
  mag: "bg-[#941c94] text-[#ffe8ff]",
  deep: "bg-[#8a20a0] text-[#ffe8ff]",
  brown: "bg-[#734f1c] text-[#f0dcc0]",
  olive: "bg-[#74721c] text-[#f5f5c8]",
  rust: "bg-[#723c1c] text-[#f5dcc8]",
  grey: "bg-[#444] text-[#a8a8a8]",
  greyBlue: "bg-[#444] text-[#7f9ee8]",
  violet: "bg-[#5a2da0] text-[#f0e8ff]",
  navy: "bg-[#304080] text-[#e0e8ff]",
  gult: "bg-[#267250] text-[#c8f0dc]",
  jaba: "bg-[#237377] text-[#c8f0f0]",
  plum: "bg-[#522a82] text-white",
  moss: "bg-[#4f7014] text-[#ecf5c8]",
  boom: "bg-[#2f6b14] text-[#d8f5c8]",
  indigo: "bg-[#322a8c] text-[#e0e0ff]",
  dolive: "bg-[#5a5a12] text-[#f0f0c8]",
};

type Region = [number, number, number, string, Tone, ("ring" | "rings" | "dot")?];

const REGIONS: Region[] = [
  [1, 1275, 1448, "Shloop Choir", "green"],
  [2, 1275, 1448, "Bloop Choir (-2", "green"],
  [3, 1275, 1430, "More Choir", "sea"],
  [4, 1344, 1430, "You gu", "sea"],
  [5, 1533, 1604, "Choir", "green"],
  [6, 1527, 1624, "Choir L", "green"],
  [7, 1445, 1468, "", "blue"], [7, 1509, 1526, "", "blue"], [7, 1585, 1604, "", "blue"],
  [7, 1663, 1682, "", "blue"], [7, 1741, 1760, "", "blue"], [7, 1897, 1915, "", "blue"],
  [8, 1449, 1896, "Talharpa", "mag"],
  [9, 1449, 1604, "Tremolo Violi", "mag"], [9, 1605, 1914, "Tremolo Violins", "mag"],
  [10, 1516, 1760, "Cello (-12)", "brown"],
  [11, 1449, 1760, "Violin (+12)", "olive"], [11, 2033, 2206, "Violin (+24)", "olive"], [11, 2567, 2626, "Violi", "olive"],
  [12, 1605, 1896, "Horns", "rust"], [12, 2033, 2206, "Horns", "rust"],
  [13, 1449, 1760, "Inst 11", "grey"],
  [14, 1449, 1784, "Bells n stuff", "violet", "rings"],
  [15, 1449, 1784, "Inst 11_bip", "grey", "rings"],
  [16, 1449, 1604, "Deep Forest", "deep"], [16, 1605, 1680, "Deep", "deep"], [16, 1681, 1760, "Deep", "deep"],
  [17, 1449, 1604, "BELLGong_M", "bell"],
  [18, 1449, 1760, "Tactic Uns unsuns", "blue", "ring"],
  [19, 1760, 1927, "BASS SOLO Y", "blue"],
  [20, 1760, 1908, "Drums cuz y", "blue"], [20, 1914, 1931, "", "blue"],
  [21, 1794, 1817, "", "blue"], [21, 1856, 1887, "", "blue"],
  [22, 1794, 1815, "", "blue"], [22, 1856, 1885, "", "blue"],
  [23, 1914, 2091, "Gultch", "gult"],
  [24, 1897, 2213, "Jababababajababa", "jaba"],
  [25, 1897, 2197, "Viola", "olive"], [25, 2567, 2626, "Viol", "olive"],
  [26, 1897, 2193, "Violins (+12)", "olive"], [26, 2567, 2626, "Violi", "olive"],
  [27, 1897, 2090, "Low Stings (-12)", "olive"], [27, 2091, 2187, "Low Sti", "olive"], [27, 2567, 2626, "Low", "olive"],
  [28, 1907, 2052, "PERCUSHIO", "blue"], [28, 2081, 2171, "PERCU", "blue"],
  [29, 2091, 2170, "Gross", "blue"],
  [30, 2149, 2273, "SpellBring", "grey"],
  [31, 2149, 2244, "Schlop", "green"],
  [32, 2244, 2261, "", "grey"],
  [33, 2244, 2261, "", "plum"],
  [34, 2237, 2275, "In", "navy"],
  [35, 2255, 2567, "Inst 34", "grey"],
  [36, 2255, 2567, "PERcussion HEAVY", "navy", "rings"],
  [37, 2149, 2244, "Bulg", "grey", "dot"], [37, 2255, 2567, "Bulgarian Choir (+24)", "green"], [37, 2567, 2624, "Bul", "green"],
  [38, 2255, 2567, "Bulgarian Choir 2", "navy"],
  [39, 2255, 2567, "The Talk (-12)", "navy"],
  [40, 2255, 2567, "The Talk (-24)", "greyBlue"],
  [41, 2255, 2581, "BASSS", "blue", "ring"],
  [42, 2489, 2547, "The", "blue"],
  [43, 2515, 2547, "T", "blue"],
  [44, 2091, 2237, "Audio 13", "grey"],
  [45, 1897, 1916, "", "rust"],
  [46, 1847, 1931, "CINEM", "dolive"],
  [47, 1916, 1959, "Ba", "moss"], [47, 2091, 2135, "Ba", "moss"],
  [48, 1760, 1819, "CH-", "boom"], [48, 2034, 2091, "CH-", "boom"], [48, 2625, 2683, "CH-", "boom"],
  [49, 2509, 2569, "CIN", "indigo"],
];

function RegionBox({ r }: { r: Region }) {
  const [, x0, x1, label, tone, extra] = r;
  return (
    <div
      className={`absolute top-0 flex h-[28px] items-center overflow-hidden whitespace-nowrap rounded-t-[5px] rounded-b-[3px] border-2 border-b-0 border-black pl-[9px] text-[23.5px] leading-[26px] ${TONES[tone]}`}
      style={{ left: x0 - RULER_X, width: x1 - x0 }}
    >
      {extra === "dot" && <span className="mr-[12px] h-[17px] w-[17px] shrink-0 rounded-full bg-[#6ef09a]" />}
      <span>{label}</span>
      {extra === "rings" && <span className="ml-[14px] shrink-0"><Ring dbl /></span>}
      {extra === "ring" && <span className="ml-[20px] shrink-0"><Ring /></span>}
    </div>
  );
}

function PlayheadCap() {
  return (
    <Svg w={34} h={33}>
      <path d="M0 3q0-3 3-3h28q3 0 3 3v12q0 4-3 8l-14 10L3 23q-3-4-3-8z" fill="#b5b5b5" />
    </Svg>
  );
}

function Timeline() {
  return (
    <div className="relative flex h-full flex-1 flex-col bg-[#3f3f3f]">
      <Ruler />
      <div className="h-[1400px] shrink-0 bg-[#2c2c2c] bg-[linear-gradient(90deg,#3c3c3c_2px,transparent_2px),linear-gradient(180deg,transparent_26px,#383838_26px,#383838_28px)] bg-[size:19.5px_28px] bg-[position:18px_0]">
        {TRACKS.map((_, i) => (
          <div key={i} className="relative h-[28px]">
            {REGIONS.filter((r) => r[0] === i + 1).map((r, j) => <RegionBox key={j} r={r} />)}
          </div>
        ))}
      </div>
      <div className="absolute bottom-[6px] left-[1396px] top-[46px] w-[2px] bg-white" />
      <div className="absolute left-[1379px] top-[41px]"><PlayheadCap /></div>
    </div>
  );
}

export default function App() {
  return (
    <div className="flex h-[1728px] w-[2934px] flex-col overflow-hidden rounded-[22px] bg-black font-[family-name:Roboto,sans-serif]">
      <TopBar />
      <div className="flex flex-1 overflow-hidden">
        <Inspector />
        <div className="w-[4px] bg-black" />
        <div className="flex h-full flex-1 flex-col">
          <EditBar />
          <div className="flex flex-1">
            <TrackList />
            <Timeline />
          </div>
        </div>
      </div>
    </div>
  );
}
